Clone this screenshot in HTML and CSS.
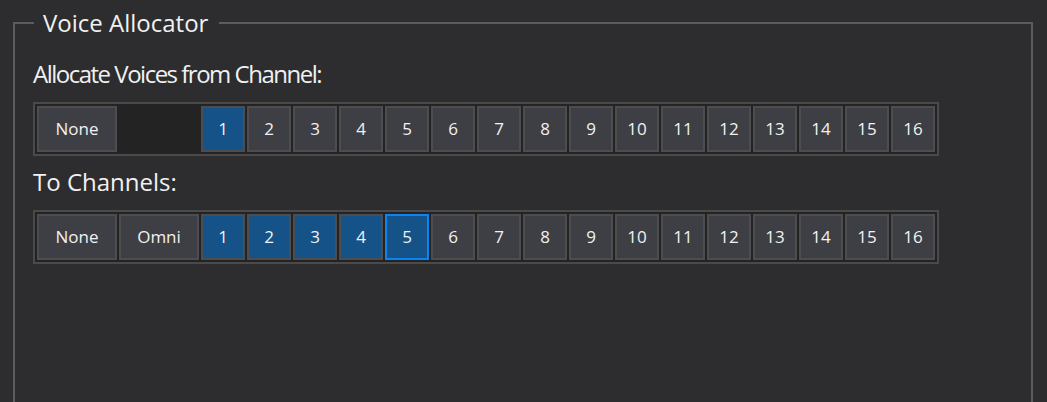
FILE: index.html
```html
<!DOCTYPE html>
<html>
<head>
<meta charset="utf-8">
<link rel="stylesheet" href="styles.css">
</head>
<body>
<fieldset class="group">
  <legend class="group-title">Voice Allocator</legend>
  <div class="label label-from">Allocate Voices from Channel:</div>
  <div class="strip">
    <button class="btn wide">None</button>
    <button class="btn wide hidden">Omni</button>
    <button class="btn num on">1</button>
    <button class="btn num">2</button>
    <button class="btn num">3</button>
    <button class="btn num">4</button>
    <button class="btn num">5</button>
    <button class="btn num">6</button>
    <button class="btn num">7</button>
    <button class="btn num">8</button>
    <button class="btn num">9</button>
    <button class="btn num">10</button>
    <button class="btn num">11</button>
    <button class="btn num">12</button>
    <button class="btn num">13</button>
    <button class="btn num">14</button>
    <button class="btn num">15</button>
    <button class="btn num">16</button>
  </div>
  <div class="label label-to">To Channels:</div>
  <div class="strip">
    <button class="btn wide">None</button>
    <button class="btn wide">Omni</button>
    <button class="btn num on">1</button>
    <button class="btn num on">2</button>
    <button class="btn num on">3</button>
    <button class="btn num on">4</button>
    <button class="btn num on focus">5</button>
    <button class="btn num">6</button>
    <button class="btn num">7</button>
    <button class="btn num">8</button>
    <button class="btn num">9</button>
    <button class="btn num">10</button>
    <button class="btn num">11</button>
    <button class="btn num">12</button>
    <button class="btn num">13</button>
    <button class="btn num">14</button>
    <button class="btn num">15</button>
    <button class="btn num">16</button>
  </div>
</fieldset>
</body>
</html>
```

FILE: styles.css
```css
html, body {
  margin: 0;
  padding: 0;
  background: #2d2d30;
  overflow: hidden;
  height: 100%;
}

body {
  font-family: "Open Sans", "Noto Sans", sans-serif;
  color: #f1f1f1;
}

.group {
  box-sizing: border-box;
  width: 1020px;
  height: calc(100% - 11px);
  margin: 11px 0 0 13px;
  padding: 0 0 0 18px;
  border: 2px solid #5c5c5e;
  border-bottom: 0;
  min-width: 0;
}

.group-title {
  margin-left: 1px;
  padding: 0 11px 0 9px;
  font-size: 24px;
  line-height: 24px;
  color: #f1f1f1;
}

.label {
  font-size: 24px;
  line-height: 28px;
  white-space: nowrap;
}

.label-from {
  margin-top: 25px;
  letter-spacing: -1.5px;
}

.label-to {
  margin-top: 12px;
}

.strip {
  display: inline-flex;
  gap: 2px;
  padding: 2px;
  margin-top: 14px;
  background: #232324;
  border: 2px solid #4a4a4b;
}

.btn {
  box-sizing: border-box;
  height: 46px;
  margin: 0;
  padding: 0;
  display: flex;
  align-items: center;
  justify-content: center;
  background: #3e3f44;
  border: 2px solid #4d4d50;
  color: #f1f1f1;
  font-family: "Open Sans", "Noto Sans", sans-serif;
  font-size: 17px;
  line-height: 20px;
}

.wide {
  width: 80px;
}

.num {
  width: 44px;
}

.hidden {
  visibility: hidden;
}

.on {
  background: #145288;
}

.focus {
  border-color: #0a84f0;
}
```
